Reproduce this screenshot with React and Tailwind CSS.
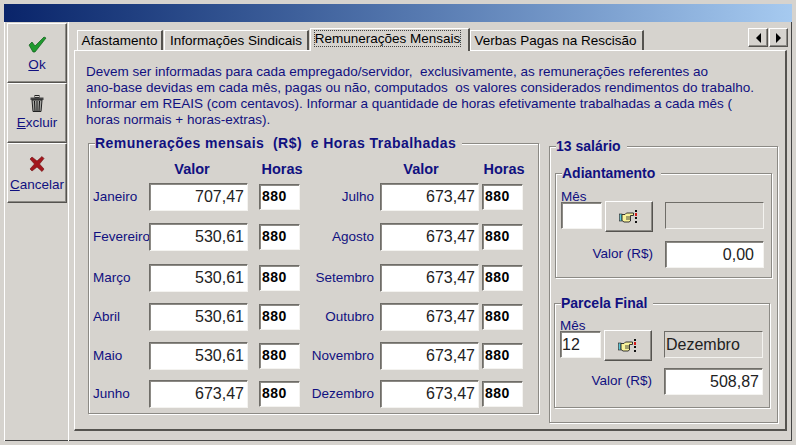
// Remunerações Mensais - diálogo estilo Windows 2000
const sunken = 'bg-white border border-t-[#6f6d68] border-l-[#6f6d68] border-r-[#f4f3f0] border-b-[#f4f3f0] shadow-[inset_1px_1px_0_#8c8a85]'
const raised = 'bg-[#d6d3ce] border border-t-white border-l-white border-r-[#55534f] border-b-[#55534f] shadow-[inset_-1px_-1px_0_#8c8a85]'
const azul = 'text-[#101080]'

const esquerda = [
  ['Janeiro', '707,47', 'mb-[12px]'],
  ['Fevereiro', '530,61', 'mb-[13px]'],
  ['Março', '530,61', 'mb-[11px]'],
  ['Abril', '530,61', 'mb-[11px]'],
  ['Maio', '530,61', 'mb-[10px]'],
  ['Junho', '673,47', ''],
]
const direita = [
  ['Julho', '673,47', 'mb-[12px]'],
  ['Agosto', '673,47', 'mb-[13px]'],
  ['Setembro', '673,47', 'mb-[11px]'],
  ['Outubro', '673,47', 'mb-[11px]'],
  ['Novembro', '673,47', 'mb-[10px]'],
  ['Dezembro', '673,47', ''],
]

function Check() {
  return (
    <svg width="19" height="17" viewBox="0 0 19 17">
      <path d="M1 9 L4 6 L7 10 L16 1 L18 2 L7 16 L5 16 Z" fill="#1f9a2e" stroke="#0d5c18" strokeWidth="0.7" />
    </svg>
  )
}

function Lixeira() {
  return (
    <svg width="14" height="17" viewBox="0 0 14 17">
      <rect x="5" y="0.5" width="4" height="2" fill="none" stroke="#222" />
      <rect x="0.5" y="2.5" width="13" height="2.5" fill="#444" />
      <path d="M2 5 H12 L11 16.5 H3 Z" fill="#a8a8a4" stroke="#222" />
      <path d="M4.5 6 L5 16 M7 6 V16 M9.5 6 L9 16" stroke="#111" strokeWidth="1" />
    </svg>
  )
}

function Xis() {
  return (
    <svg width="16" height="16" viewBox="0 0 16 16">
      <path d="M1 3 L3 1 L8 5 L13 0.5 L15 2.5 L10.5 8 L15 13 L13 15.5 L8 11 L3 15 L1 13 L5.5 8 Z" fill="#a3161c" stroke="#6e0f12" strokeWidth="0.6" />
    </svg>
  )
}

function Mao() {
  return (
    <svg width="20" height="14" viewBox="0 0 20 14">
      <rect x="0.5" y="4" width="2.5" height="7" fill="#5cc8d8" stroke="#222" strokeWidth="0.6" />
      <path d="M3 4.5 H6 L7.5 3 H14.5 V5.5 H11.5 V11 L10 12 H5 L3 10.5 Z" fill="#f7f29a" stroke="#222" strokeWidth="0.9" />
      <path d="M7 7 H11 M7 9 H11" stroke="#222" strokeWidth="0.8" />
      <path d="M17 0 V2" stroke="#111" strokeWidth="2" />
      <path d="M17 3 V6" stroke="#d01818" strokeWidth="2" />
      <path d="M17 7 V9 M17 11 V13" stroke="#111" strokeWidth="2" />
    </svg>
  )
}

function BotaoLateral({ icon, children, topo, gap }) {
  return (
    <div className={`${raised} w-[60px] h-[60px] flex flex-col items-center justify-start ${topo}`}>
      <div className="h-[20px] flex items-center justify-center">{icon}</div>
      <div className={`text-[13.5px] leading-[16px] ${gap} ${azul}`}>{children}</div>
    </div>
  )
}

function Aba({ children, ativa, largura }) {
  if (ativa) {
    return (
      <div className={`${largura} h-[23px] -mb-px z-10 bg-[#d6d3ce] border-t border-l border-white border-r-2 border-r-[#55534f] text-center text-[13.5px] leading-[19px] text-black whitespace-nowrap`}>
        <span className="border border-dotted border-[#444]">{children}</span>
      </div>
    )
  }
  return (
    <div className={`${largura} h-[20px] mt-[2px] border-t border-l border-white border-r-2 border-r-[#55534f] text-center text-[13.5px] leading-[20px] text-black whitespace-nowrap`}>
      {children}
    </div>
  )
}

function Grupo({ titulo, className, tituloClass, children }) {
  return (
    <div className={`relative border border-[#8c8a85] shadow-[inset_1px_1px_0_#fff,1px_1px_0_#fff] ${className}`}>
      <span className={`absolute -top-[10px] bg-[#d6d3ce] pr-[6px] font-bold text-[14px] leading-[18px] whitespace-nowrap ${azul} ${tituloClass}`}>
        {titulo}
      </span>
      {children}
    </div>
  )
}

function Linha({ mes, valor, margem, rotulo }) {
  return (
    <div className={`flex items-center ${margem}`}>
      <div className={`${rotulo} text-[13.5px] ${azul} whitespace-nowrap overflow-hidden`}>{mes}</div>
      <div className={`${sunken} w-[99px] h-[28px] text-right pr-[3px] text-[16px] leading-[26px] text-[#222]`}>{valor}</div>
    </div>
  )
}

function Horas({ margem }) {
  return (
    <div className={`${sunken} w-[41px] h-[26px] pl-[2px] font-bold text-[14px] tracking-[0.5px] leading-[23px] text-black ${margem}`}>880</div>
  )
}

function Coluna({ linhas, rotulo, className, gap, valorX, horasX }) {
  return (
    <div className={className}>
      <div className={`flex font-bold text-[14.5px] leading-[18px] h-[23px] items-start whitespace-nowrap ${azul}`}>
        <span className={`text-center ${valorX}`}>Valor</span>
        <span className={`text-center ${horasX}`}>Horas</span>
      </div>
      {linhas.map(([mes, valor, margem]) => (
        <div key={mes} className={`flex items-center ${gap}`}>
          <Linha mes={mes} valor={valor} margem={margem} rotulo={rotulo} />
          <Horas margem={margem} />
        </div>
      ))}
    </div>
  )
}

function Mes13({ mes, nome, valor, valorTopo, valorPr }) {
  return (
    <div>
      <div className="text-[13.5px] leading-[14px] h-[11px] pl-[5px] text-[#101080]">Mês</div>
      <div className="flex items-start gap-[3px] pl-[5px]">
        <div className={`${sunken} w-[41px] h-[27px] mt-[1px] text-[16px] leading-[25px] pl-px text-[#222]`}>{mes}</div>
        <div className={`${raised} w-[48px] h-[31px] flex items-center justify-center`}>
          <Mao />
        </div>
        <div className="ml-[9px] w-[99px] h-[27px] mt-[1px] border border-t-[#6f6d68] border-l-[#6f6d68] border-r-[#f4f3f0] border-b-[#f4f3f0] text-[16px] leading-[25px] pl-px text-[#222]">
          {nome}
        </div>
      </div>
      <div className={`flex items-center pl-[5px] ${valorTopo}`}>
        <div className={`w-[92px] text-right text-[13.5px] ${azul}`}>Valor (R$)</div>
        <div className={`${sunken} ml-[12px] w-[99px] h-[27px] text-right text-[16px] leading-[25px] text-[#222] ${valorPr}`}>{valor}</div>
      </div>
    </div>
  )
}

export default function App() {
  return (
    <div className="w-[796px] h-[445px] bg-[#d6d3ce] border-[4px] border-[#d6d3ce] shadow-[inset_1px_1px_0_#fff,inset_-1px_-1px_0_#444] font-['Liberation_Sans',Arial,sans-serif] overflow-hidden flex flex-col">
      <div className="h-[18px] shrink-0 bg-gradient-to-r from-[#0a246a] to-[#a6caf0]" />
      <div className="flex flex-1 min-h-0">
        {/* barra lateral */}
        <div className="w-[65px] shrink-0 pl-[3px] pt-px border-r border-white flex flex-col">
          <BotaoLateral icon={<Check />} topo="pt-[10px]" gap="mt-[3px]"><u>O</u>k</BotaoLateral>
          <BotaoLateral icon={<Lixeira />} topo="pt-[9px]" gap="mt-[2px]"><u>E</u>xcluir</BotaoLateral>
          <BotaoLateral icon={<Xis />} topo="pt-[10px]" gap="mt-[3px]"><u>C</u>ancelar</BotaoLateral>
        </div>

        <div className="flex-1 min-w-0 pl-[5px] pt-[5px] flex flex-col">
          {/* abas */}
          <div className="flex items-end h-[23px] pl-[3px] pr-[4px]">
            <Aba largura="w-[86px]">Afastamento</Aba>
            <Aba largura="w-[145px] ml-px">Informações Sindicais</Aba>
            <Aba largura="w-[160px] ml-px pr-[4px]" ativa>Remunerações Mensais</Aba>
            <Aba largura="w-[174px] pr-[2px]">Verbas Pagas na Rescisão</Aba>
            <div className="ml-auto mb-[3px] flex gap-px">
              <div className={`${raised} w-[20px] h-[19px] flex items-center justify-center`}>
                <div className="w-0 h-0 border-y-[5px] border-y-transparent border-r-[5px] border-r-black" />
              </div>
              <div className={`${raised} w-[19px] h-[19px] flex items-center justify-center`}>
                <div className="w-0 h-0 border-y-[5px] border-y-transparent border-l-[5px] border-l-black" />
              </div>
            </div>
          </div>

          {/* página da aba */}
          <div className="w-[713px] h-[381px] border border-t-white border-l-white border-r-2 border-r-[#55534f] border-b-2 border-b-[#55534f] pl-[11px] pt-[13px]">
            <p className={`text-[13.5px] leading-[16px] whitespace-pre ${azul}`}>
              {'Devem ser informadas para cada empregado/servidor,  exclusivamente, as remunerações referentes ao\nano-base devidas em cada mês, pagas ou não, computados  os valores considerados rendimentos do trabalho.\nInformar em REAIS (com centavos). Informar a quantidade de horas efetivamente trabalhadas a cada mês (\nhoras normais + horas-extras).'}
            </p>

            <div className="flex mt-[15px] items-start">
              <Grupo
                titulo={<span className="tracking-[0.45px] whitespace-pre">Remunerações mensais  (R$)  e Horas Trabalhadas</span>}
                className="ml-[2px] w-[451px] h-[271px] pt-[16px] pl-[4px] flex"
                tituloClass="left-[6px]"
              >
                <Coluna
                  linhas={esquerda}
                  rotulo="w-[56px]"
                  gap="gap-[11px]"
                  valorX="ml-[79px] w-[40px]"
                  horasX="ml-[49px] w-[42px]"
                />
                <Coluna
                  linhas={direita}
                  rotulo="w-[71px] text-right pr-[6px]"
                  gap="gap-[3px]"
                  className="ml-[6px]"
                  valorX="ml-[92px] w-[40px]"
                  horasX="ml-[42px] w-[42px]"
                />
              </Grupo>

              <Grupo
                titulo="13 salário"
                className="ml-[10px] mt-[3px] w-[229px] h-[277px] pl-[5px] pt-[26px] flex flex-col"
                tituloClass="left-[6px]"
              >
                <Grupo titulo="Adiantamento" className="w-[217px] h-[105px] pt-[16px]" tituloClass="left-[6px]">
                  <Mes13 mes="" nome="" valor="0,00" valorTopo="mt-[9px]" valorPr="pr-[9px]" />
                </Grupo>
                <Grupo titulo="Parcela Final" className="w-[216px] h-[105px] mt-[25px] -ml-px pt-[15px]" tituloClass="left-[6px]">
                  <Mes13 mes="12" nome="Dezembro" valor="508,87" valorTopo="mt-[7px]" valorPr="pr-[3px]" />
                </Grupo>
              </Grupo>
            </div>
          </div>
        </div>
      </div>
    </div>
  )
}
